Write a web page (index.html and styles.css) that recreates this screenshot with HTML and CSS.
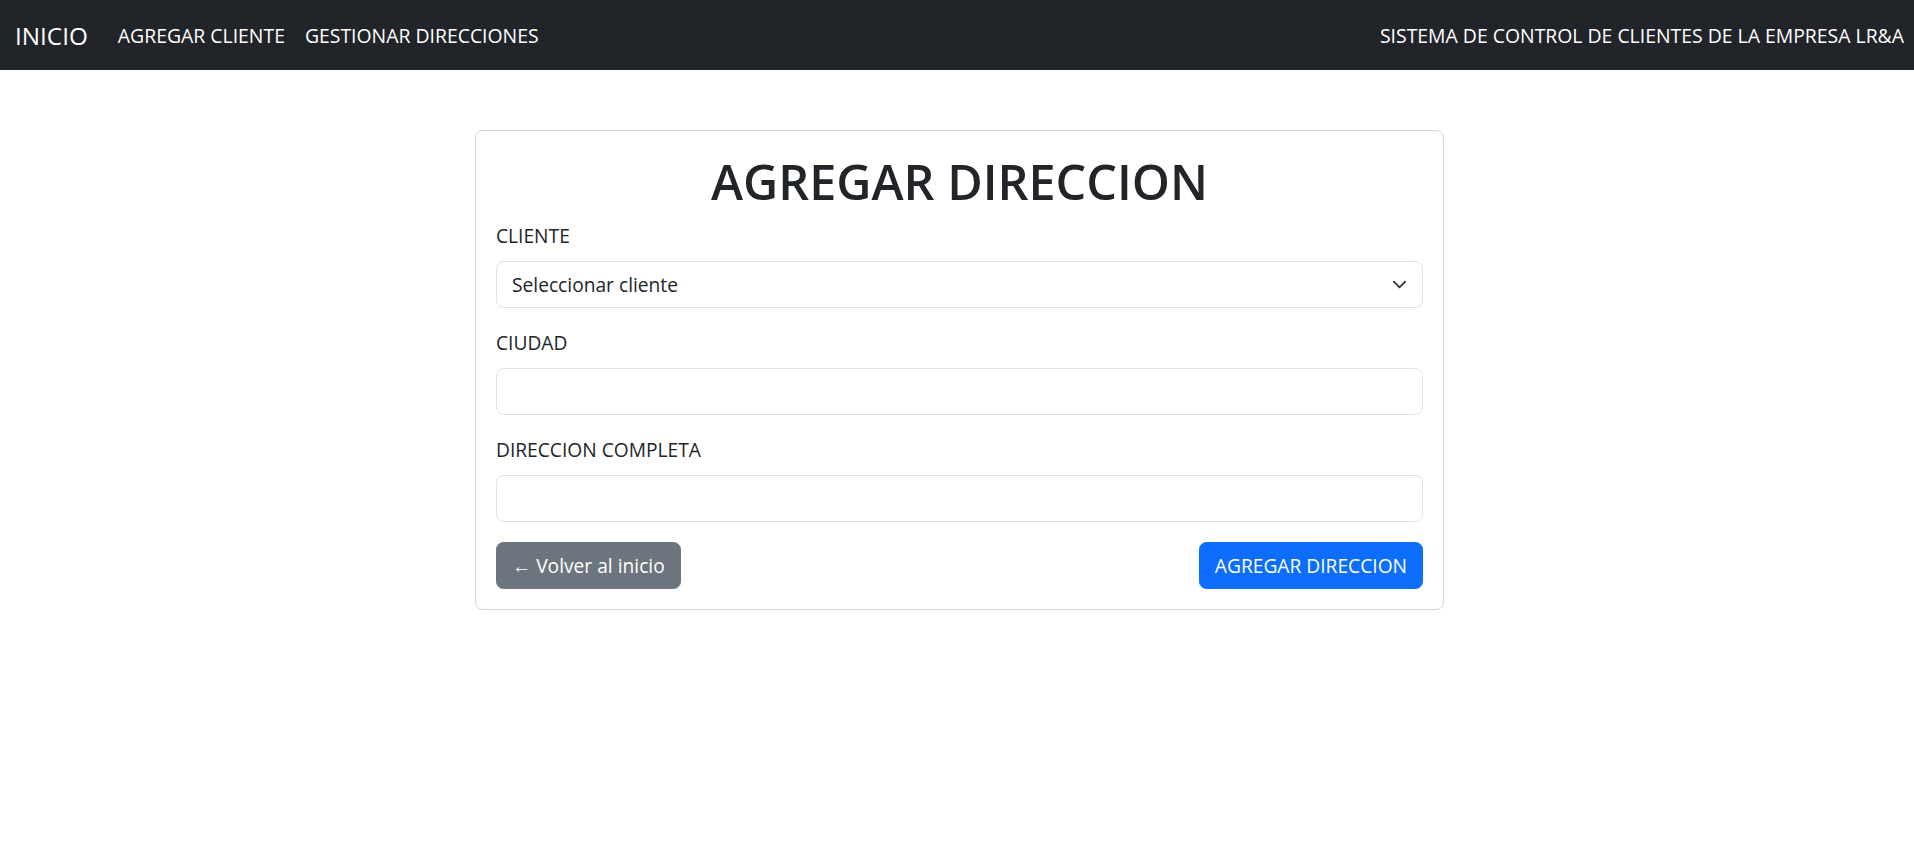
FILE: index.html
```html
<!DOCTYPE html>
<html lang="es">
<head>
<meta charset="utf-8">
<title>Agregar dirección</title>
<link rel="stylesheet" href="styles.css">
</head>
<body>
<nav class="navbar">
  <div class="nav-left">
    <a class="brand" href="#">INICIO</a>
    <a class="nav-link" href="#">AGREGAR CLIENTE</a>
    <a class="nav-link" href="#">GESTIONAR DIRECCIONES</a>
  </div>
  <span class="nav-text">SISTEMA DE CONTROL DE CLIENTES DE LA EMPRESA LR&amp;A</span>
</nav>
<main class="page">
  <section class="card">
    <h1 class="title">AGREGAR DIRECCION</h1>
    <div class="field">
      <label class="label">CLIENTE</label>
      <div class="control select">
        <span>Seleccionar cliente</span>
        <svg class="chev" width="15" height="15" viewBox="0 0 16 16"><path d="M2 5l6 6 6-6" fill="none" stroke="#343a40" stroke-width="2" stroke-linecap="round" stroke-linejoin="round"/></svg>
      </div>
    </div>
    <div class="field">
      <label class="label">CIUDAD</label>
      <div class="control"></div>
    </div>
    <div class="field">
      <label class="label">DIRECCION COMPLETA</label>
      <div class="control"></div>
    </div>
    <div class="actions">
      <a class="btn btn-secondary" href="#">← Volver al inicio</a>
      <button class="btn btn-primary" type="button">AGREGAR DIRECCION</button>
    </div>
  </section>
</main>
</body>
</html>
```

FILE: styles.css
```css
* { box-sizing: border-box; }
body {
  margin: 0;
  font-family: "Open Sans", "Noto Sans", sans-serif;
  color: #212529;
  background: #fff;
}
.navbar {
  height: 70px;
  background: #212529;
  display: flex;
  align-items: center;
  justify-content: space-between;
  padding: 0 10px 0 15px;
}
.nav-left { display: flex; align-items: center; }
.brand {
  color: #fff;
  text-decoration: none;
  font-size: 24.3px;
  margin-right: 20px;
}
.nav-link {
  color: #fff;
  text-decoration: none;
  font-size: 19.4px;
  padding: 0 10px;
}
.nav-text {
  color: #fff;
  font-size: 19.4px;
}
.page { padding-top: 60px; }
.card {
  width: 969px;
  margin-left: calc(50% - 482px);
  border: 1px solid #d3d4d5;
  border-radius: 7.5px;
  padding: 20px;
}
.title {
  margin: 0 0 10px;
  font-size: 48.5px;
  line-height: 60px;
  font-weight: 600;
  text-align: center;
}
.field { margin-bottom: 20px; }
.label {
  display: block;
  font-size: 19.2px;
  line-height: 30px;
  margin-bottom: 10px;
}
.control {
  height: 47px;
  border: 1px solid #dee2e6;
  border-radius: 7.5px;
  padding: 7.5px 15px;
  font-size: 19.2px;
  line-height: 30px;
}
.select {
  display: flex;
  align-items: center;
  justify-content: space-between;
}
.actions {
  display: flex;
  justify-content: space-between;
}
.btn {
  display: inline-block;
  height: 47px;
  padding: 7.5px 15px;
  border: 1px solid transparent;
  border-radius: 7.5px;
  font-family: inherit;
  font-size: 19.2px;
  line-height: 30px;
  color: #fff;
  text-decoration: none;
  cursor: pointer;
}
.btn-secondary { background: #6c757d; border-color: #6c757d; }
.btn-primary { background: #0d6efd; border-color: #0d6efd; }
```
